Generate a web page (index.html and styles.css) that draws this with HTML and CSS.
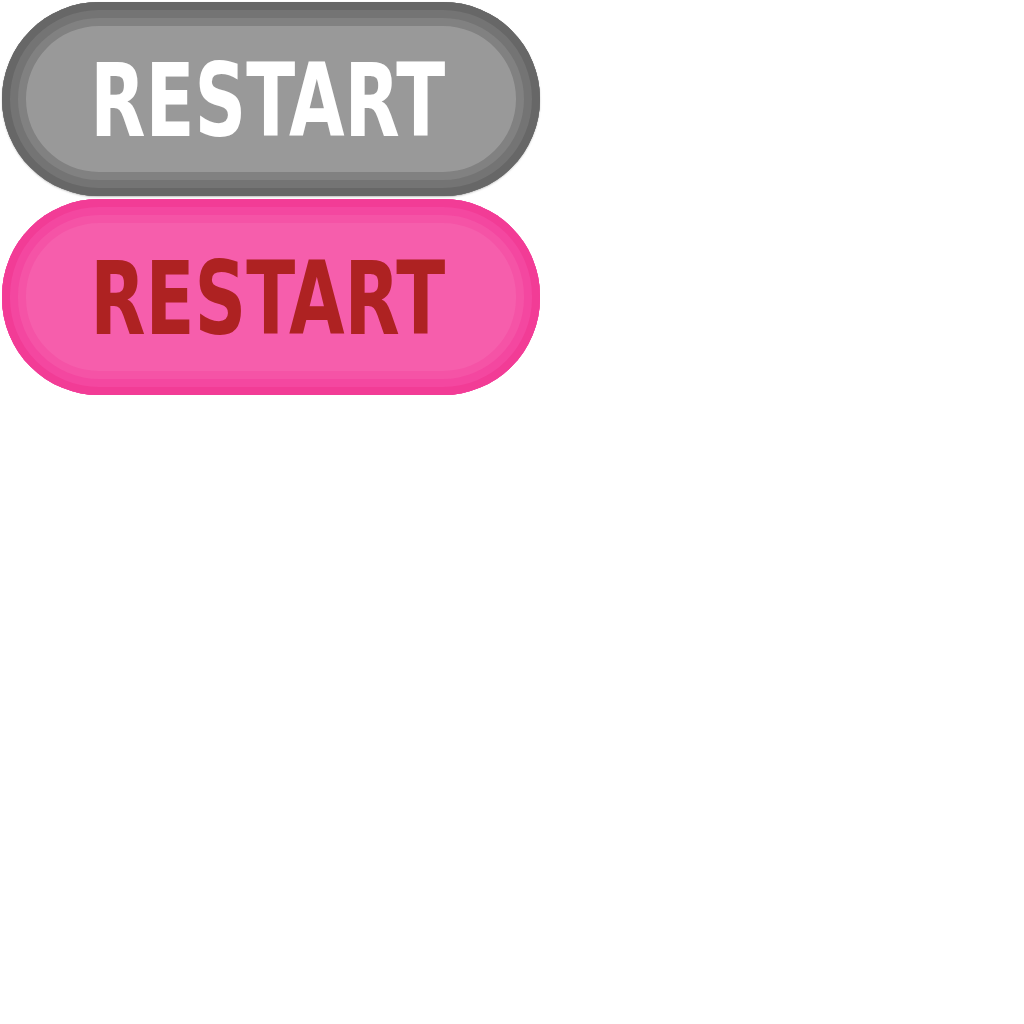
FILE: index.html
```html
<!DOCTYPE html>
<html>
<head>
<meta charset="utf-8">
<link rel="stylesheet" href="styles.css">
</head>
<body>
<div class="stack">
  <button class="btn btn-gray"><span class="label">RESTART</span></button>
  <button class="btn btn-pink"><span class="label">RESTART</span></button>
</div>
</body>
</html>
```
FILE: styles.css
```css
html, body {
  margin: 0;
  padding: 0;
  background: #ffffff;
}
.stack {
  display: flex;
  flex-direction: column;
  align-items: flex-start;
  gap: 3px;
  padding: 2px 0 0 2px;
}
.btn {
  width: 538px;
  height: 194px;
  border: none;
  border-radius: 97px;
  padding: 4px 7px 0 0;
  display: flex;
  align-items: center;
  justify-content: center;
  font-family: "Liberation Sans Narrow", "DejaVu Sans Condensed", "DejaVu Sans", sans-serif;
  font-stretch: condensed;
  font-weight: bold;
  font-size: 101px;
  line-height: 1;
  letter-spacing: 0px;
}
.label {
  display: inline-block;
  transform: scaleX(0.79);
}
.btn-gray {
  background: #999999;
  color: #ffffff;
  box-shadow: inset 0 0 0 8px #676767, inset 0 0 0 16px #747474, inset 0 0 0 24px #818181, 0 1px 2px rgba(0,0,0,0.25);
}
.btn-pink {
  height: 196px;
  background: #f65eac;
  color: #ae2222;
  box-shadow: inset 0 0 0 8px #f23c96, inset 0 0 0 16px #f447a0, inset 0 0 0 24px #f553a6;
}
```
